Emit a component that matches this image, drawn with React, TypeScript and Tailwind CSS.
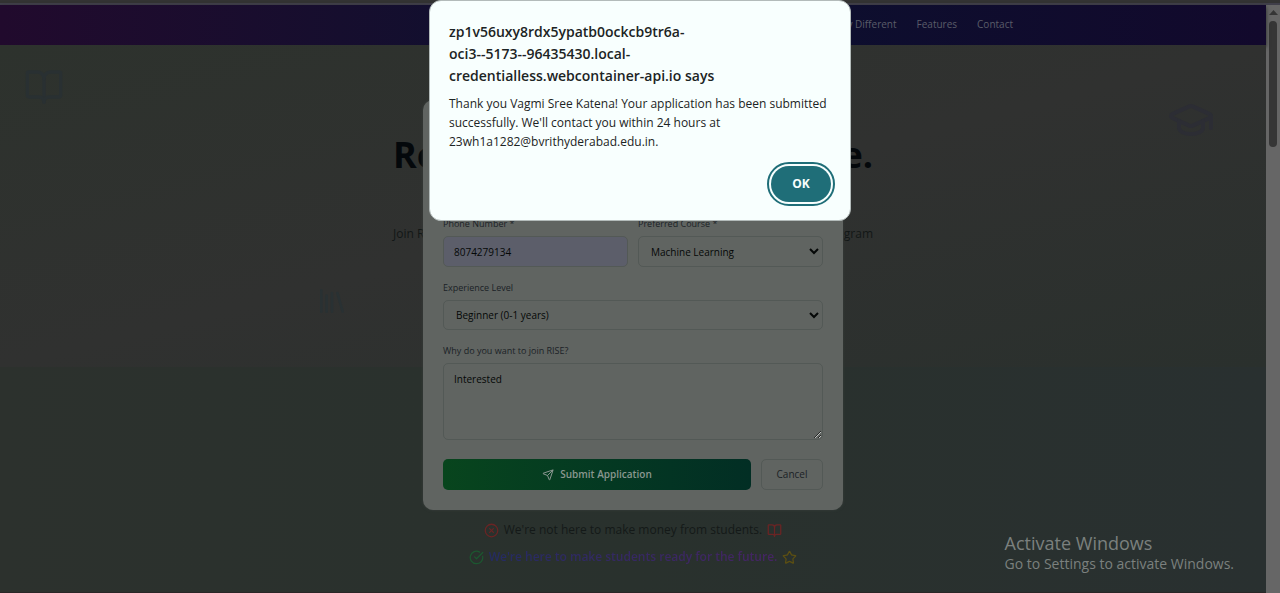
import { BookOpen, CircleCheckBig, CircleX, GraduationCap, Send, Star } from "lucide-react";
import type { ReactNode } from "react";

const CONTROL =
  "w-full rounded-[5px] border border-[#535956] text-[10px] text-[#050807] outline-none";

function Field({ id, label, children }: { id: string; label: string; children: ReactNode }) {
  return (
    <div className="flex min-w-0 flex-1 flex-col gap-[6px]">
      <label htmlFor={id} className="text-[9px] leading-3 font-medium text-[#1b2226]">
        {label}
      </label>
      {children}
    </div>
  );
}

function Header() {
  return (
    <header className="bg-linear-to-r from-[#210a2d] via-[#0a102f] to-[#12092c] shadow-[0_2px_4px_#252927]">
      <nav className="mx-auto flex h-10 max-w-[760px] items-center justify-end gap-5 pb-[2px] text-[10px] font-medium text-[#5a5c69]">
        <a href="#why">Why Different</a>
        <a href="#features">Features</a>
        <a href="#contact">Contact</a>
      </nav>
    </header>
  );
}

function Hero() {
  return (
    <section className="relative flex h-[322px] flex-col items-center bg-linear-to-br from-[#2d322d] via-[#303130] to-[#2a302d] pt-[83px]">
      <BookOpen className="absolute top-[22px] left-6 size-10 text-[#293032]" strokeWidth={2} />
      <GraduationCap className="absolute top-[51px] right-[51px] size-12 text-[#2c2d34]" strokeWidth={2} />
      <svg
        className="absolute top-[240px] left-[316px] size-8 text-[#293133]"
        viewBox="0 0 24 24"
        fill="none"
        stroke="currentColor"
        strokeWidth="2"
        strokeLinecap="round"
      >
        <path d="m16 6 4 14M12 6v14M8 8v12M4 4v16" />
      </svg>
      <h1 className="flex w-[480px] justify-between text-[36px] leading-[54px] font-bold text-[#04080b]">
        <span>Re</span>
        <span>e.</span>
      </h1>
      <p className="mt-[42px] flex w-[480px] justify-between text-[12px] leading-5 text-[#121716]">
        <span>Join RI</span>
        <span>gram</span>
      </p>
    </section>
  );
}

function Promise() {
  return (
    <section className="flex flex-1 flex-col items-center gap-[7px] border-b border-[#2a2626] bg-linear-to-r from-[#2c312d] via-[#29312d] to-[#293030] pt-[153px] pb-6 text-[12px] leading-5">
      <p className="flex items-center gap-[5px] text-[#141918]">
        <CircleX className="size-[15px] text-[#6b2424]" />
        We're not here to make money from students.
        <BookOpen className="size-[15px] text-[#6b2424]" />
      </p>
      <p className="flex items-center gap-[5px] font-semibold">
        <CircleCheckBig className="size-[15px] text-[#1c5730]" />
        <span className="bg-linear-to-r from-[#242b62] to-[#452463] bg-clip-text text-transparent">
          We're here to make students ready for the future.
        </span>
        <Star className="size-[15px] text-[#5c4f12]" />
      </p>
    </section>
  );
}

function ApplicationForm() {
  return (
    <form className="flex w-[420px] flex-col gap-[15px] rounded-[10px] bg-[#606461] p-5 shadow-[0_0_3px_#3a403d]">
      <div className="mt-[52px] flex gap-[10px]">
        <input aria-label="Full Name" className={`${CONTROL} h-[31px] bg-transparent px-[10px]`} />
        <input aria-label="Email" type="email" className={`${CONTROL} h-[31px] bg-transparent px-[10px]`} />
      </div>
      <div className="flex items-start gap-[10px]">
        <Field id="phone" label="Phone Number *">
          <input id="phone" type="tel" className={`${CONTROL} h-[31px] bg-[#5c5e6a] px-[10px]`} defaultValue="8074279134" />
        </Field>
        <Field id="course" label="Preferred Course *">
          <select id="course" className={`${CONTROL} h-[31px] bg-transparent pl-2`}>
            <option>Machine Learning</option>
          </select>
        </Field>
      </div>
      <Field id="level" label="Experience Level">
        <select id="level" className={`${CONTROL} h-[30px] bg-transparent pl-2`}>
          <option>Beginner (0-1 years)</option>
        </select>
      </Field>
      <Field id="reason" label="Why do you want to join RISE?">
        <textarea
          id="reason"
          className={`${CONTROL} h-[77px] resize bg-transparent px-[10px] py-[7px] leading-4`}
          defaultValue="Interested"
        />
      </Field>
      <div className="mt-1 flex gap-[10px]">
        <button
          type="submit"
          className="flex h-[31px] flex-1 items-center justify-center gap-[6px] rounded-[5px] bg-linear-to-r from-[#08451d] to-[#022e24] text-[10px] font-semibold text-[#8a9790]"
        >
          <Send className="size-3" />
          Submit Application
        </button>
        <button type="button" className="h-[31px] w-[62px] rounded-[5px] border border-[#535956] text-[10px] font-medium text-[#1b2226]">
          Cancel
        </button>
      </div>
    </form>
  );
}

function AlertDialog() {
  return (
    <div
      role="alertdialog"
      aria-labelledby="alert-title"
      aria-describedby="alert-text"
      className="flex w-[422px] flex-col rounded-[12px] border border-[#b3bbba] bg-[#f8fffe] px-[19px] pt-5 pb-[18px] text-[#1c2424]"
    >
      <h2 id="alert-title" className="text-[14px] leading-[22px] font-semibold">
        zp1v56uxy8rdx5ypatb0ockcb9tr6a-
        <br />
        oci3--5173--96435430.local-
        <br />
        credentialless.webcontainer-api.io says
      </h2>
      <p id="alert-text" className="mt-[7px] text-[12px] leading-[19px]">
        Thank you Vagmi Sree Katena! Your application has been submitted
        <br />
        successfully. We'll contact you within 24 hours at
        <br />
        23wh1a1282@bvrithyderabad.edu.in.
      </p>
      <button
        type="button"
        className="mt-[15px] h-9 w-[60px] self-end rounded-full bg-[#1f6e78] text-[12px] font-bold text-[#f8fffe] outline-2 outline-offset-2 outline-[#1f6e78]"
      >
        OK
      </button>
    </div>
  );
}

export default function App() {
  return (
    <div className="relative flex min-h-screen flex-col overflow-hidden bg-[#2c312e] font-['Open_Sans','Noto_Sans',sans-serif]">
      <div className="h-[5px] border-b-2 border-[#403f4a] bg-[#333333]" />
      <div className="flex flex-1">
        <main className="relative flex min-w-0 flex-1 flex-col">
          <Header />
          <Hero />
          <Promise />
          <div className="absolute inset-x-0 top-[95px] flex justify-center">
            <ApplicationForm />
          </div>
        </main>
        <div className="flex w-[14px] flex-col items-center bg-[#666666] pt-[5px]">
          <svg className="h-[5px] w-[9px]" viewBox="0 0 9 5">
            <path d="M4.500 0 9 5H0z" fill="#363636" />
          </svg>
          <div className="mt-[6px] h-[126px] w-2 rounded-full bg-[#363636]" />
        </div>
      </div>
      <div className="absolute inset-x-0 top-0 flex justify-center">
        <AlertDialog />
      </div>
      <aside className="absolute right-[46px] bottom-5 text-[#7b807e]">
        <p className="text-[18px] leading-6">Activate Windows</p>
        <p className="text-[14px] leading-[18px]">Go to Settings to activate Windows.</p>
      </aside>
    </div>
  );
}
